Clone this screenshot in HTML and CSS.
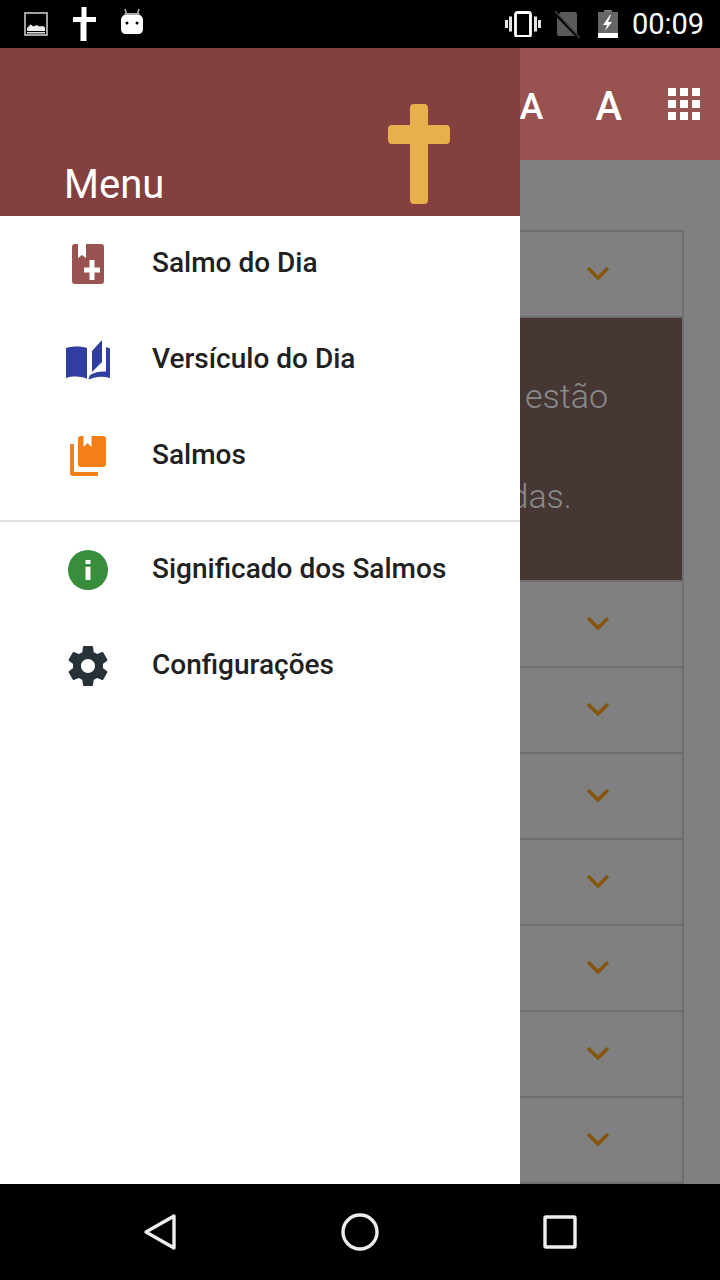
FILE: index.html
```html
<!DOCTYPE html>
<html lang="pt">
<head>
<meta charset="utf-8">
<title>Salmos</title>
<link rel="stylesheet" href="styles.css">
</head>
<body>
<div class="screen">
  <header class="status">
    <div class="status-left">
      <svg class="s24" viewBox="0 0 24 24"><rect x="1" y="1" width="22" height="22" fill="none" stroke="#c8c8c8" stroke-width="1.6"/><path d="M3 19v-3l3.500-3.500 3 2 3-1.500 3 1.500 3.500-.5 2 1.500V19z" fill="#eee"/><rect x="3" y="20" width="18" height="1.500" fill="#ddd"/></svg>
      <svg class="s24 tall" viewBox="0 0 24 34"><path d="M9.500 0h5v10h9.500v5h-9.500v19h-6V15H1v-5h8.500z" fill="#fff"/></svg>
      <svg class="s24" viewBox="0 0 24 28"><path d="M5 1l1.500 5M19 1l-1.500 5" stroke="#bbb" stroke-width="1.400" fill="none"/><path d="M5 5h14l1 2H4z" fill="#aaa"/><path d="M1 12c0-3 2-5 4-5h14c2 0 4 2 4 5v9c0 3-2 5-5 5H6c-3 0-5-2-5-5z" fill="#fff"/><circle cx="7" cy="15" r="1.500" fill="#000"/><circle cx="17" cy="15" r="1.500" fill="#000"/></svg>
    </div>
    <div class="status-right">
      <svg class="vib" viewBox="0 0 36 26"><rect x="10.500" y="1.500" width="15" height="24" rx="2" fill="none" stroke="#fff" stroke-width="2.800"/><path d="M5.500 5.500v15M1.500 9v8M30.500 5.500v15M34.500 9v8" stroke="#e4e4e4" stroke-width="3" fill="none"/></svg>
      <svg class="sim" viewBox="0 0 26 27"><path d="M7 1h14a2 2 0 0 1 2 2v22H5a2 2 0 0 1-2-2V5z" fill="#5a5a5a"/><path d="M0 1l25 26" stroke="#000" stroke-width="3"/><path d="M1 0l25 27" stroke="#444" stroke-width="1.500"/></svg>
      <svg class="bat" viewBox="0 0 20 28"><rect x="6" y="0" width="8" height="3" fill="#777"/><rect x="0" y="2" width="20" height="26" fill="#666"/><rect x="0" y="23" width="20" height="5" fill="#fff"/><path d="M12 5L5 15h4l-2 6 7-9h-4l3-7z" fill="#fff"/></svg>
      <span class="time">00:09</span>
    </div>
  </header>

  <main class="stage">
    <div class="app">
      <div class="appbar">
        <span class="font-small">A</span>
        <span class="font-big">A</span>
        <div class="grid-icon">
          <i></i><i></i><i></i><i></i><i></i><i></i><i></i><i></i><i></i>
        </div>
      </div>
      <div class="list">
        <div class="row"><svg class="chev" viewBox="0 0 24 14"><path d="M2 2l10 10L22 2" fill="none" stroke-width="3.600"/></svg></div>
        <div class="panel">
          <p class="line-one">estão</p>
          <p class="line-two">das.</p>
        </div>
        <div class="row"><svg class="chev" viewBox="0 0 24 14"><path d="M2 2l10 10L22 2" fill="none" stroke-width="3.600"/></svg></div>
        <div class="row"><svg class="chev" viewBox="0 0 24 14"><path d="M2 2l10 10L22 2" fill="none" stroke-width="3.600"/></svg></div>
        <div class="row"><svg class="chev" viewBox="0 0 24 14"><path d="M2 2l10 10L22 2" fill="none" stroke-width="3.600"/></svg></div>
        <div class="row"><svg class="chev" viewBox="0 0 24 14"><path d="M2 2l10 10L22 2" fill="none" stroke-width="3.600"/></svg></div>
        <div class="row"><svg class="chev" viewBox="0 0 24 14"><path d="M2 2l10 10L22 2" fill="none" stroke-width="3.600"/></svg></div>
        <div class="row"><svg class="chev" viewBox="0 0 24 14"><path d="M2 2l10 10L22 2" fill="none" stroke-width="3.600"/></svg></div>
        <div class="row"><svg class="chev" viewBox="0 0 24 14"><path d="M2 2l10 10L22 2" fill="none" stroke-width="3.600"/></svg></div>
      </div>
    </div>

    <aside class="drawer">
      <div class="drawer-head">
        <span class="drawer-title">Menu</span>
        <svg class="head-cross" viewBox="0 0 62 100"><path d="M26 0h10a4 4 0 0 1 4 4v17h18a4 4 0 0 1 4 4v11a4 4 0 0 1-4 4H40v56a4 4 0 0 1-4 4H26a4 4 0 0 1-4-4V40H4a4 4 0 0 1-4-4V25a4 4 0 0 1 4-4h18V4a4 4 0 0 1 4-4z" fill="#e8b04c"/></svg>
      </div>
      <nav class="group">
        <a class="item">
          <svg class="ico" viewBox="0 0 48 48"><path d="M11 4h3v14l4-3 4 3V4h15a3 3 0 0 1 3 3v34a3 3 0 0 1-3 3H11a3 3 0 0 1-3-3V7a3 3 0 0 1 3-3z" fill="#985250"/><path d="M25.500 20h5v7.500H36v5h-5.500V40h-5v-7.500H20v-5h5.500z" fill="#fff"/></svg>
          <span>Salmo do Dia</span>
        </a>
        <a class="item">
          <svg class="ico" viewBox="0 0 48 48"><path d="M2 12c7-2 15-2 21 0v31c-6-3-14-3-21-1z" fill="#303f9f"/><path d="M28 15L38 4v22L28 36z" fill="#303f9f"/><path d="M42 11l4 1.500V42c-7-2-14-2-21 1.500l-.5-1 1.500-3.500c5-3 11-4 16-3.500z" fill="#303f9f"/></svg>
          <span>Versículo do Dia</span>
        </a>
        <a class="item">
          <svg class="ico" viewBox="0 0 48 48"><path d="M17 4h2.500v11l4-4 4 4V4H39a3 3 0 0 1 3 3v25a3 3 0 0 1-3 3H17a3 3 0 0 1-3-3V7a3 3 0 0 1 3-3z" fill="#f57f17"/><path d="M6 12h4v28h24v4H9a3 3 0 0 1-3-3z" fill="#f57f17"/></svg>
          <span>Salmos</span>
        </a>
      </nav>
      <nav class="group group-second">
        <a class="item">
          <svg class="ico" viewBox="0 0 48 48"><circle cx="24" cy="24" r="20" fill="#388e3c"/><path d="M21.500 14h5v4h-5zM21.500 20.700h5V34h-5z" fill="#fff"/></svg>
          <span>Significado dos Salmos</span>
        </a>
        <a class="item">
          <svg class="ico" viewBox="0 0 24 24"><path fill="#263238" d="M19.430 12.980c.04-.32.07-.64.07-.98s-.03-.66-.07-.98l2.110-1.650c.19-.15.24-.42.12-.64l-2-3.460c-.12-.22-.39-.3-.61-.22l-2.490 1c-.52-.4-1.080-.73-1.690-.98l-.38-2.650C14.460 2.180 14.250 2 14 2h-4c-.25 0-.46.18-.49.42l-.38 2.650c-.61.25-1.170.59-1.690.98l-2.490-1c-.23-.09-.49 0-.61.22l-2 3.460c-.13.22-.07.49.12.64l2.110 1.650c-.04.32-.07.65-.07.98s.03.66.07.98l-2.110 1.650c-.19.15-.24.42-.12.64l2 3.460c.12.22.39.3.61.22l2.490-1c.52.4 1.080.73 1.690.98l.38 2.650c.03.24.24.42.49.42h4c.25 0 .46-.18.49-.42l.38-2.650c.61-.25 1.170-.59 1.690-.98l2.490 1c.23.09.49 0 .61-.22l2-3.460c.12-.22.07-.49-.12-.64l-2.110-1.650zM12 15.500c-1.930 0-3.500-1.570-3.500-3.500s1.570-3.500 3.500-3.500 3.500 1.570 3.500 3.500-1.570 3.500-3.500 3.500z"/></svg>
          <span>Configurações</span>
        </a>
      </nav>
    </aside>
  </main>

  <footer class="navbar">
    <svg class="nav-ico" viewBox="0 0 40 40"><path d="M6 20L34 4v32z" fill="none" stroke="#eee" stroke-width="3.400" stroke-linejoin="round"/></svg>
    <svg class="nav-ico" viewBox="0 0 40 40"><circle cx="20" cy="20" r="17" fill="none" stroke="#eee" stroke-width="3.400"/></svg>
    <svg class="nav-ico" viewBox="0 0 40 40"><rect x="5" y="5" width="30" height="30" rx="1" fill="none" stroke="#eee" stroke-width="3.400"/></svg>
  </footer>
</div>
</body>
</html>
```

FILE: styles.css
```css
* { box-sizing: border-box; }
html, body { margin: 0; padding: 0; }
body { font-family: Roboto, "Noto Sans", sans-serif; background: #000; }
.screen { width: 720px; height: 1280px; display: flex; flex-direction: column; overflow: hidden; }

.status { height: 48px; flex: none; background: #000; color: #fff; display: flex; justify-content: space-between; align-items: center; padding: 0 16px 0 24px; }
.status-left { display: flex; align-items: center; gap: 24px; }
.s24 { width: 24px; height: 24px; display: block; }
.s24.tall { height: 34px; }
.s24:nth-child(3) { height: 28px; margin-top: -4px; }
.status-right { display: flex; align-items: center; }
.vib { width: 36px; height: 26px; display: block; margin-right: 13px; }
.sim { width: 26px; height: 27px; display: block; margin-right: 18px; }
.bat { width: 20px; height: 28px; display: block; margin-right: 14px; }
.time { font-size: 29px; line-height: 48px; letter-spacing: -.05px; }

.stage { flex: 1; position: relative; min-height: 0; }
.app { height: 100%; background: #808080; display: flex; flex-direction: column; }
.appbar { height: 112px; flex: none; background: #985250; color: #fff; display: flex; align-items: center; justify-content: flex-end; padding-right: 20px; }
.font-small { font-size: 36px; line-height: 36px; font-weight: 500; margin: 6px 52px 0 0; }
.font-big { font-size: 40px; line-height: 40px; font-weight: 500; margin: 6px 46px 0 0; }
.grid-icon { display: grid; grid-template-columns: repeat(3, 8px); grid-auto-rows: 8px; gap: 4px; }
.grid-icon i { background: #fff; display: block; }

.list { flex: 1; margin: 70px 36px 0 36px; border-top: 2px solid #6e6e6e; display: flex; flex-direction: column; }
.row { height: 86px; border: solid #6e6e6e; border-width: 0 2px 2px; display: flex; align-items: center; justify-content: flex-end; padding: 0 72px 2px 0; }
.chev { width: 24px; height: 14px; display: block; stroke: #85560f; }
.panel { height: 264px; background: #463735; border: solid #6e6e6e; border-width: 0 2px 2px; color: #8a8a8a; font-weight: 300; font-size: 34px; text-align: right; }
.panel p { margin: 0; line-height: 100px; }
.line-one { padding: 28px 74px 0 0; }
.line-two { padding-right: 110px; }

.drawer { position: absolute; left: 0; top: 0; bottom: 0; width: 520px; background: #fff; display: flex; flex-direction: column; }
.drawer-head { height: 168px; flex: none; background: #843f3f; display: flex; justify-content: space-between; align-items: flex-end; padding: 0 70px 12px 64px; }
.drawer-title { font-size: 40px; line-height: 48px; color: #fff; margin-bottom: -5px; }
.head-cross { width: 62px; height: 100px; display: block; }
.group { display: flex; flex-direction: column; }
.group-second { margin-top: 16px; border-top: 2px solid #e3e3e3; }
.item { height: 96px; display: flex; align-items: center; padding-left: 64px; gap: 40px; color: #212121; font-size: 28px; font-weight: 500; }
.item span { margin-bottom: 4px; }
.ico { width: 48px; height: 48px; display: block; flex: none; }

.navbar { height: 96px; flex: none; background: #000; display: flex; justify-content: center; align-items: center; gap: 160px; }
.nav-ico { width: 40px; height: 40px; display: block; }
```
